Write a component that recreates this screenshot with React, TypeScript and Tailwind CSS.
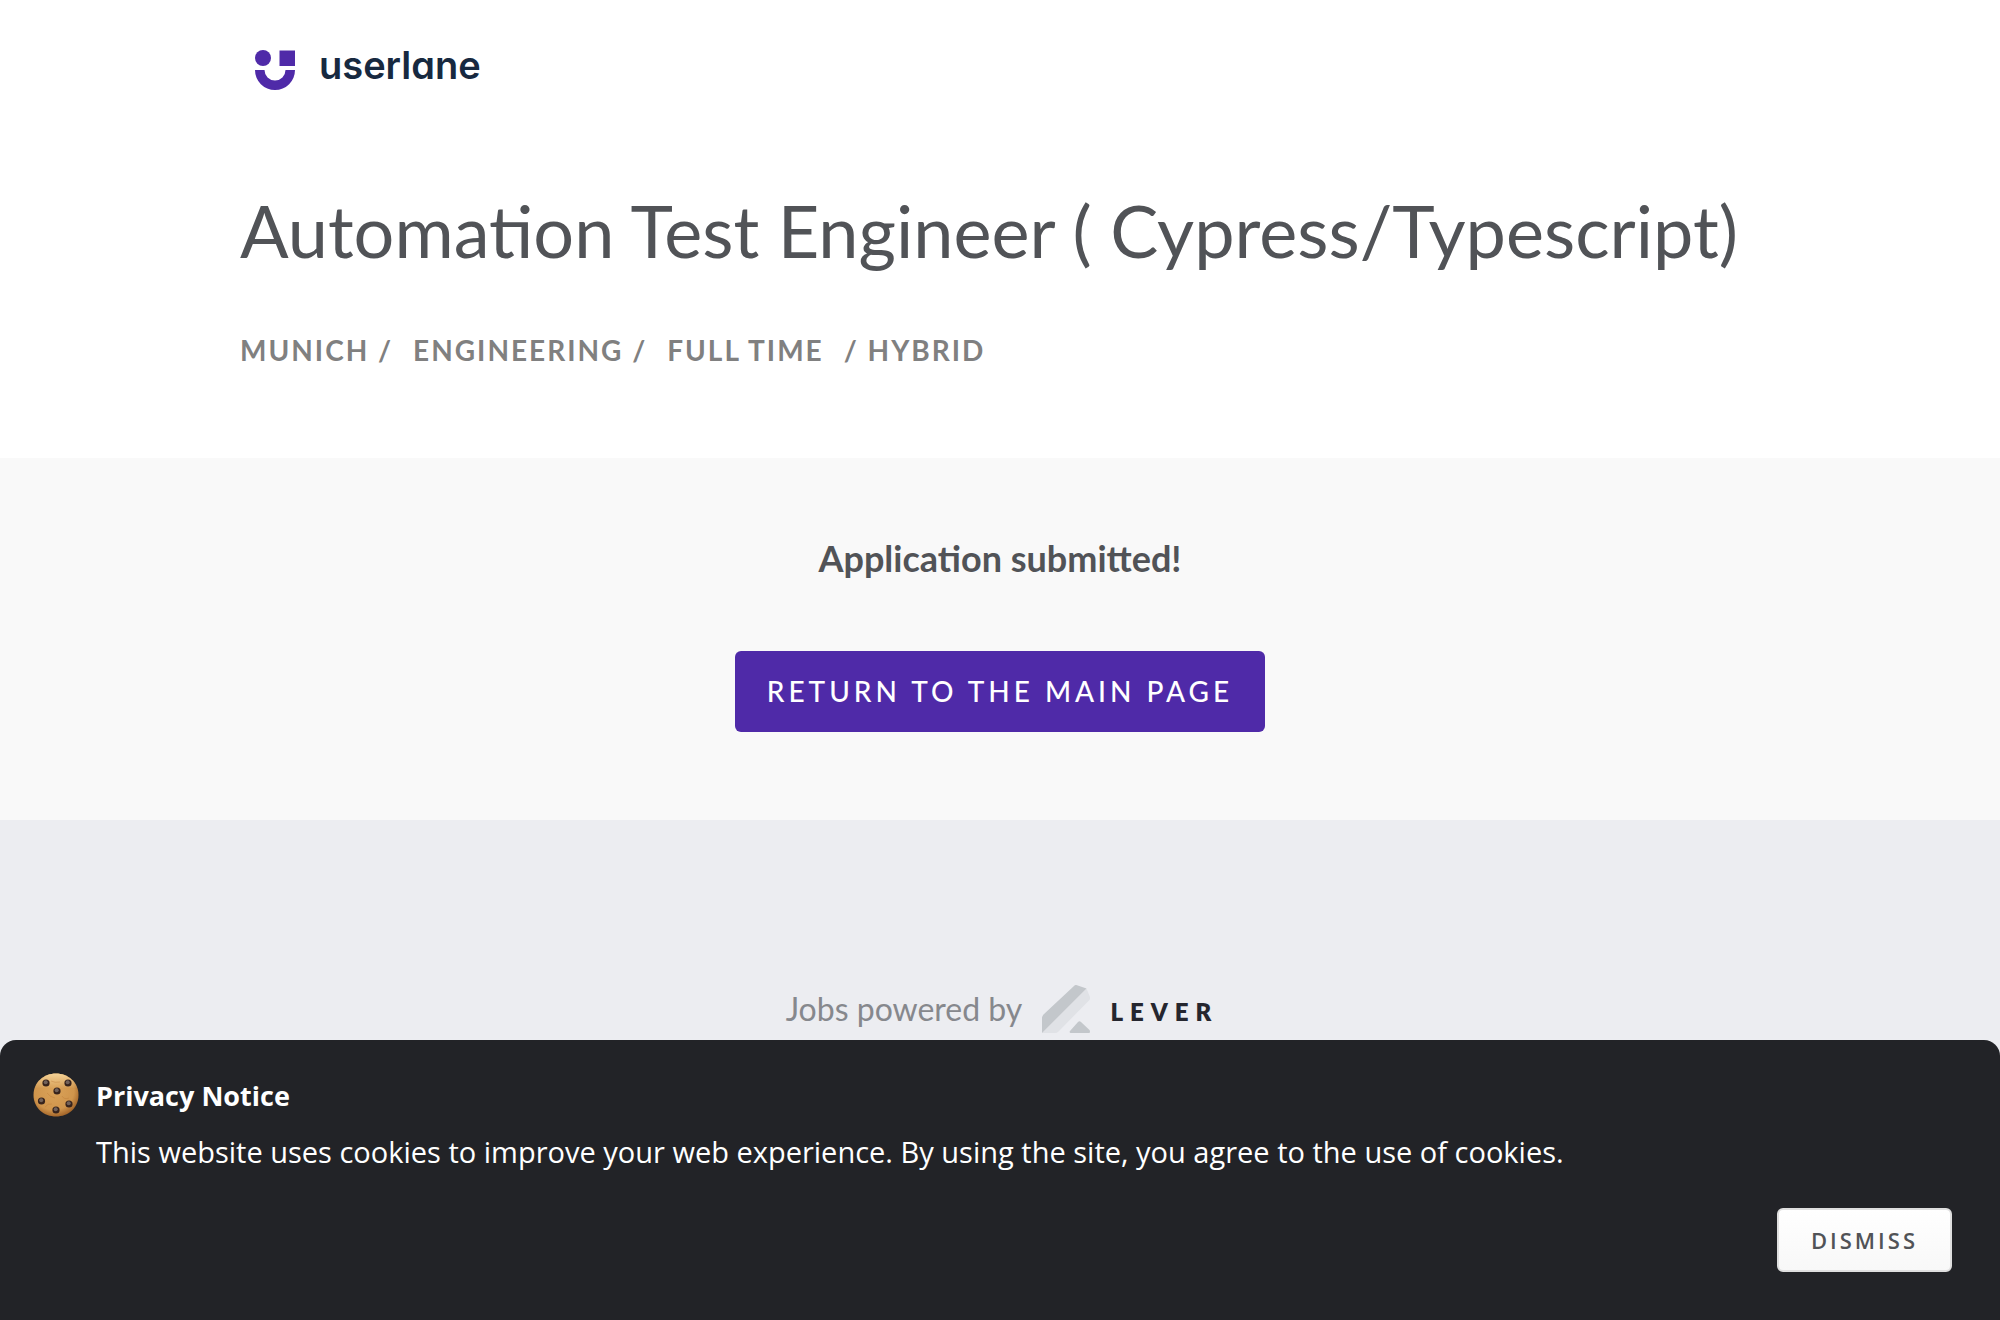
function UserlaneMark() {
  return (
    <svg className="h-10 w-10" viewBox="0 0 40 40" fill="#4f2aa8" aria-hidden="true">
      <circle cx="8" cy="8" r="8" />
      <rect x="24.500" y="0.500" width="15.500" height="15.500" />
      <path d="M0 20H9.500A10.500 10.500 0 0 0 30.500 20H40A20 20 0 0 1 0 20Z" />
    </svg>
  );
}

function LeverMark() {
  return (
    <svg className="h-12 w-12" viewBox="0 0 48 48" aria-hidden="true">
      <path d="M44.500 3.500L48 12Q48.500 14 47 15.500L16.500 46.500Q15 48 13 48H0Z" fill="#e0e2e6" />
      <path d="M0 48V33Q0 31 1.500 29.500L32 1Q33.500 -0.500 35 0.200L44.500 3.500Z" fill="#c3c7cb" />
      <path d="M28 46L36 37Q37.500 35.500 39 37L47.500 45Q48.500 46.500 47.500 48H28.500Q27 47.500 28 46Z" fill="#c3c7cb" />
    </svg>
  );
}

const chips = [
  [13, 10],
  [35, 10],
  [24, 18],
  [8.5, 28],
  [36, 31],
  [23, 37],
];

const cookieOutline =
  "M23 0.5C35 0.5 45.500 9 45.500 22C45.500 35 35 43.500 23 43.500S0.500 35 0.500 22S11 0.500 23 0.500Z";

function Cookie() {
  return (
    <svg className="mt-px h-11 w-[46px] shrink-0" viewBox="0 0 46 44" aria-hidden="true">
      <defs>
        <radialGradient id="dough" cx="0.45" cy="0.4" r="0.6">
          <stop offset="0" stopColor="#daa259" />
          <stop offset="0.75" stopColor="#d0954c" />
          <stop offset="1" stopColor="#a5672b" />
        </radialGradient>
        <linearGradient id="shine" x1="0" y1="0" x2="0" y2="1">
          <stop offset="0" stopColor="#ffe3ab" stopOpacity="0.8" />
          <stop offset="0.35" stopColor="#ffe3ab" stopOpacity="0" />
        </linearGradient>
      </defs>
      <path d={cookieOutline} fill="url(#dough)" />
      <path d={cookieOutline} fill="url(#shine)" />
      <g fill="none" stroke="#b87430" strokeOpacity="0.35">
        <path d="M14 20q3 4 8 5" />
        <path d="M29 23q2 4 7 2" />
        <path d="M18 8q4 2 9 1" />
        <path d="M12 34q3-4 7-3" />
      </g>
      {chips.map(([x, y]) => (
        <g key={`${x}-${y}`}>
          <circle cx={x} cy={y} r="3.6" fill="#37231c" />
          <circle cx={x - 0.3} cy={y - 0.8} r="2" fill="#71615a" />
        </g>
      ))}
    </svg>
  );
}

export default function App() {
  return (
    <div className="flex min-h-screen flex-col bg-[#ecedf1] font-['Lato',sans-serif] text-[#515357]">
      <header className="bg-white pt-12 pb-22">
        <div className="mx-auto w-full max-w-[1520px]">
          <a href="#" className="ml-[15px] inline-flex h-11 items-center gap-6 text-[#172940]">
            <UserlaneMark />
            <span className="pb-2.5 font-['Inter',sans-serif] text-[38px] leading-10 font-semibold [font-feature-settings:'cv11']">
              userlane
            </span>
          </a>
          <h1 className="mt-[89px] text-[72px] leading-[90px]">Automation Test Engineer ( Cypress/Typescript)</h1>
          <div className="mt-[55px] flex gap-5 text-[28px] leading-10 font-bold tracking-[2px] text-[#808080]">
            <span>MUNICH /</span>
            <span>ENGINEERING /</span>
            <span>FULL TIME</span>
            <span>/ HYBRID</span>
          </div>
        </div>
      </header>

      <main className="flex flex-col items-center bg-[#f9f9f9] pt-20 pb-22">
        <h3 className="text-4xl font-bold">Application submitted!</h3>
        <a
          href="#"
          className="mt-[73px] flex h-[81px] items-center rounded-md bg-[#4f2aa8] px-8 pb-0.5 text-[28px] font-medium tracking-[4px] text-white"
        >
          RETURN TO THE MAIN PAGE
        </a>
      </main>

      <footer className="flex justify-center pt-[165px]">
        <a href="#" className="flex items-center gap-5 pl-1 text-[32px] text-[#86888d]">
          <span>Jobs powered by</span>
          <LeverMark />
          <span className="pt-1.5 text-2xl font-extrabold tracking-[7px] text-[#25262f]">LEVER</span>
        </a>
      </footer>

      <section
        aria-label="Privacy Notice"
        className="fixed inset-x-0 bottom-0 rounded-t-2xl bg-[#222327] pt-8 pr-8 pb-12 pl-[33px] font-['Open_Sans',sans-serif] text-white"
      >
        <div className="flex gap-[17px]">
          <Cookie />
          <div className="text-[29px] leading-[56px]">
            <h2 className="-mt-1 text-[27px] leading-[56px] font-bold">Privacy Notice</h2>
            <p>This website uses cookies to improve your web experience. By using the site, you agree to the use of cookies.</p>
          </div>
        </div>
        <div className="mt-7 mr-4 flex justify-end">
          <button
            type="button"
            className="h-16 rounded-md border-2 border-[#dfdfdf] bg-linear-to-b from-white to-[#f8f8f8] px-8 text-[22px] font-semibold tracking-[3px] text-[#515357]"
          >
            DISMISS
          </button>
        </div>
      </section>
    </div>
  );
}
